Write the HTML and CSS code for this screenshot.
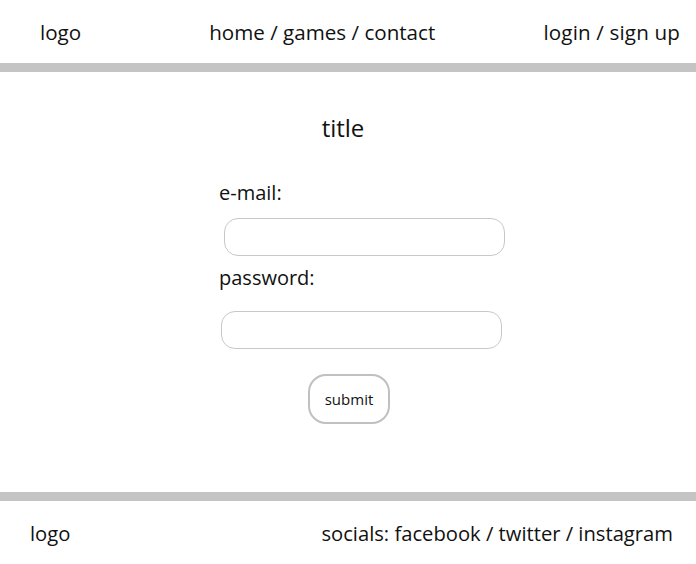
FILE: index.html
```html
<!DOCTYPE html>
<html>
<head>
<meta charset="utf-8">
<link rel="stylesheet" href="styles.css">
</head>
<body>
<header class="site-header">
  <span class="logo">logo</span>
  <nav class="nav">home / games / contact</nav>
  <span class="auth">login / sign up</span>
</header>
<div class="rule"></div>
<main class="main">
  <h1 class="title">title</h1>
  <form class="form">
    <label class="label">e-mail:</label>
    <input class="field field-email" type="text">
    <label class="label label-pass">password:</label>
    <input class="field field-pass" type="password">
    <div class="actions"><button class="submit" type="button">submit</button></div>
  </form>
</main>
<div class="rule rule-bottom"></div>
<footer class="site-footer">
  <span class="logo-foot">logo</span>
  <span class="socials">socials: facebook / twitter / instagram</span>
</footer>
</body>
</html>
```
FILE: styles.css
```css
html, body {
  margin: 0;
  padding: 0;
  background: #fff;
  color: #111;
  font-family: "Open Sans", "Noto Sans", sans-serif;
}
.site-header {
  height: 63px;
  display: flex;
  align-items: center;
  padding: 0 16px 0 40px;
  font-size: 20.6px;
  box-sizing: border-box;
}
.nav { margin-left: 128px; }
.auth { margin-left: auto; letter-spacing: 0.15px; }
.rule {
  height: 9px;
  background: #c4c4c4;
}
.main {
  height: 420px;
  box-sizing: border-box;
  padding-top: 40px;
}
.title {
  margin: 0;
  font-weight: 400;
  font-size: 24px;
  text-align: center;
  padding-right: 10px;
  line-height: 1.3;
}
.form {
  margin: 37px 0 0 219px;
  display: flex;
  flex-direction: column;
  align-items: flex-start;
}
.label {
  font-size: 20px;
  line-height: 1.3;
}
.field {
  width: 281px;
  height: 38px;
  box-sizing: border-box;
  border: 1px solid #c8c8c8;
  border-radius: 14px;
  margin: 12px 0 0 5px;
  padding: 0 12px;
  outline: none;
}
.label-pass { margin-top: 9px; }
.field-pass { margin: 20px 0 0 2px; }
.actions {
  margin-top: 25px;
  padding-left: 89px;
}
.submit {
  width: 82px;
  height: 50px;
  border: 2px solid #c0c0c0;
  border-radius: 18px;
  background: #fff;
  font-family: inherit;
  font-size: 15px;
  color: #111;
}
.rule-bottom { margin-top: 0; }
.site-footer {
  height: 63px;
  display: flex;
  align-items: center;
  padding: 0 23px 0 30px;
  font-size: 20.2px;
}
.socials { margin-left: auto; }
```
